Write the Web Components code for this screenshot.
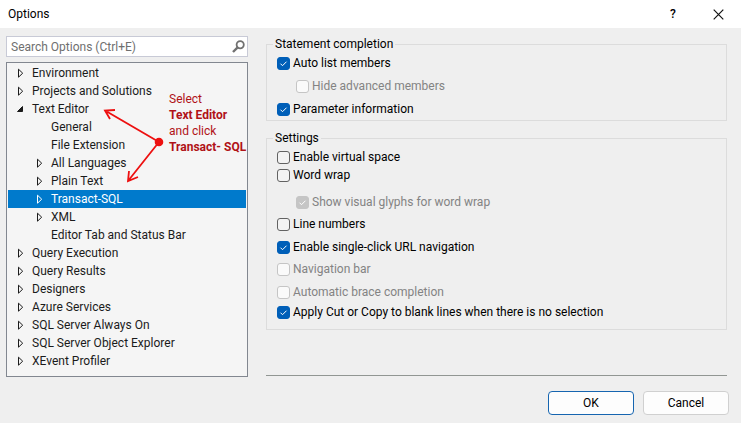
<!DOCTYPE html>
<html lang="en">
<head>
<meta charset="utf-8">
<meta name="viewport" content="width=device-width, initial-scale=1">
<title>Options</title>
<style>
  body {
    margin: 0;
    font-family: Roboto, "Open Sans", sans-serif;
    font-size: 12px;
    line-height: 18px;
    color: #1b1b1b;
    background: #efefef;
  }
</style>
</head>
<body>
<options-dialog heading="Options">
  <search-box slot="side" placeholder="Search Options (Ctrl+E)"></search-box>
  <options-tree slot="side">
    <tree-row state="closed">Environment</tree-row>
    <tree-row state="closed">Projects and Solutions</tree-row>
    <tree-row state="open">Text Editor</tree-row>
    <tree-row nested>General</tree-row>
    <tree-row nested>File Extension</tree-row>
    <tree-row nested state="closed">All Languages</tree-row>
    <tree-row nested state="closed">Plain Text</tree-row>
    <tree-row nested state="closed" selected>Transact-SQL</tree-row>
    <tree-row nested state="closed">XML</tree-row>
    <tree-row nested>Editor Tab and Status Bar</tree-row>
    <tree-row state="closed">Query Execution</tree-row>
    <tree-row state="closed">Query Results</tree-row>
    <tree-row state="closed">Designers</tree-row>
    <tree-row state="closed">Azure Services</tree-row>
    <tree-row state="closed">SQL Server Always On</tree-row>
    <tree-row state="closed">SQL Server Object Explorer</tree-row>
    <tree-row state="closed">XEvent Profiler</tree-row>
    <tree-callout slot="callout">
      Select<br><b>Text Editor</b><br>and click<br><b>Transact- SQL</b>
    </tree-callout>
  </options-tree>

  <option-group heading="Statement completion">
    <check-option checked>Auto list members</check-option>
    <check-option nested disabled space="medium">Hide advanced members</check-option>
    <check-option checked space="medium">Parameter information</check-option>
  </option-group>
  <option-group heading="Settings">
    <check-option>Enable virtual space</check-option>
    <check-option>Word wrap</check-option>
    <check-option nested disabled checked space="large">Show visual glyphs for word wrap</check-option>
    <check-option space="small">Line numbers</check-option>
    <check-option checked space="medium">Enable single-click URL navigation</check-option>
    <check-option disabled space="small">Navigation bar</check-option>
    <check-option disabled space="medium">Automatic brace completion</check-option>
    <check-option checked space="tiny">Apply Cut or Copy to blank lines when there is no selection</check-option>
  </option-group>

  <dialog-button slot="actions" primary>OK</dialog-button>
  <dialog-button slot="actions">Cancel</dialog-button>
</options-dialog>

<script>
class OptionsDialog extends HTMLElement {
  constructor() {
    super();

    this.shadowObj = this.attachShadow({ mode: "open" });
    this.render();
  }

  getStyles() {
    return `
        <style>
        :host {
          display: flex;
          flex-direction: column;
          min-height: 100vh;
        }

        header {
          display: flex;
          align-items: center;
          height: 28px;
          padding: 0 8px;
          background: #fff;
          color: #000;
        }

        h1 {
          flex: 1;
          margin: 0;
          font-size: 12px;
          font-weight: normal;
        }

        header button {
          display: flex;
          align-items: center;
          justify-content: center;
          width: 60px;
          height: 24px;
          padding: 0;
          border: 0;
          background: none;
          color: #000;
          font: inherit;
          font-weight: 500;
        }

        header button:last-child {
          width: 30px;
        }

        main {
          display: flex;
          flex: 1;
          gap: 18px;
          padding: 8px 14px 0 6px;
        }

        .side {
          display: flex;
          flex-direction: column;
          flex: 0 0 242px;
          gap: 5px;
        }

        .page {
          display: flex;
          flex: 1;
          flex-direction: column;
          gap: 9px;
          margin-bottom: 1px;
          border-bottom: 1px solid #919693;
        }

        footer {
          display: flex;
          justify-content: flex-end;
          gap: 9px;
          padding: 14px 12px 8px;
        }
        </style>
      `;
  }

  getTemplate() {
    return `
          ${this.getStyles()}
          <header>
            <h1>${this.getAttribute("heading")}</h1>
            <button type="button" aria-label="Help">?</button>
            <button type="button" aria-label="Close">
              <svg width="11" height="11" viewBox="0 0 11 11" stroke="#111" stroke-width="1.2">
                <path d="M.7 .7 10.3 10.3M10.3 .7.7 10.3"/>
              </svg>
            </button>
          </header>
          <main>
            <div class="side"><slot name="side"></slot></div>
            <div class="page"><slot></slot></div>
          </main>
          <footer><slot name="actions"></slot></footer>
        `;
  }

  render() {
    this.shadowObj.innerHTML = this.getTemplate();
  }
}

class SearchBox extends HTMLElement {
  constructor() {
    super();

    this.shadowObj = this.attachShadow({ mode: "open" });
    this.render();
  }

  getStyles() {
    return `
        <style>
        :host {
          display: flex;
          align-items: center;
          box-sizing: border-box;
          height: 21px;
          padding: 0 2px 0 4px;
          border: 1px solid #c8cad6;
          background: #fff;
        }

        input {
          flex: 1;
          min-width: 0;
          padding: 0;
          border: 0;
          outline: 0;
          background: none;
          font: inherit;
        }

        input::placeholder {
          color: #6f6f6f;
          opacity: 1;
        }
        </style>
      `;
  }

  getTemplate() {
    const text = this.getAttribute("placeholder");
    return `
          ${this.getStyles()}
          <input type="text" placeholder="${text}" aria-label="${text}">
          <svg width="13" height="13" viewBox="0 0 13 13" fill="none" stroke="#717171">
            <circle cx="8.2" cy="4.8" r="3.6" stroke-width="1.8"/>
            <path d="M5.4 7.6 1 12" stroke-width="2.4"/>
          </svg>
        `;
  }

  render() {
    this.shadowObj.innerHTML = this.getTemplate();
  }
}

class OptionsTree extends HTMLElement {
  constructor() {
    super();

    this.shadowObj = this.attachShadow({ mode: "open" });
    this.render();
  }

  getTemplate() {
    return `
          <style>
          :host {
            display: block;
            position: relative;
            flex: 1;
            box-sizing: border-box;
            padding: 1px 1px 5px;
            border: 1px solid #828790;
            background: #f5f5f5;
          }
          </style>
          <div role="tree" aria-label="Option pages"><slot></slot></div>
          <slot name="callout"></slot>
        `;
  }

  render() {
    this.shadowObj.innerHTML = this.getTemplate();
  }
}

class TreeRow extends HTMLElement {
  constructor() {
    super();

    this.shadowObj = this.attachShadow({ mode: "open" });
    this.setAttribute("role", "treeitem");
    this.render();
  }

  getStyles() {
    return `
        <style>
        :host {
          display: flex;
          align-items: center;
          height: 18px;
          padding-left: 8px;
          white-space: nowrap;
        }

        :host([nested]) {
          padding-left: 27px;
        }

        :host([selected]) {
          background: #007acc;
          color: #fff;
        }

        svg {
          width: 8px;
          height: 10px;
          margin-right: 8px;
          fill: none;
          stroke: currentColor;
        }
        </style>
      `;
  }

  getArrow() {
    switch (this.getAttribute("state")) {
      case "open":
        return `<path d="M6.5 2.500v5h-5z" fill="currentColor"/>`;
      case "closed":
        return `<path d="M2.500 1.200v8L6.700 5.200z"/>`;
      default:
        return "";
    }
  }

  getTemplate() {
    return `
          ${this.getStyles()}
          <svg viewBox="0 0 8 10" aria-hidden="true">${this.getArrow()}</svg>
          <span><slot></slot></span>
        `;
  }

  render() {
    this.shadowObj.innerHTML = this.getTemplate();
  }
}

// Red note and arrows floating over the tree
class TreeCallout extends HTMLElement {
  constructor() {
    super();

    this.shadowObj = this.attachShadow({ mode: "open" });
    this.render();
  }

  getTemplate() {
    return `
          <style>
          :host {
            display: flex;
            position: absolute;
            top: 28px;
            left: 96px;
            gap: 4px;
            color: #b01217;
            line-height: 16px;
            white-space: nowrap;
            pointer-events: none;
          }
          </style>
          <svg width="62" height="96" viewBox="0 0 62 96" fill="none" stroke="#ed1010" stroke-width="1.8">
            <path d="M56 51 2 19.500M12 19 2 19.500 7 28M56 51 25 90M26 80 25 90 35 86"/>
            <circle cx="56" cy="51" r="3.400" fill="#ed1010"/>
          </svg>
          <div><slot></slot></div>
        `;
  }

  render() {
    this.shadowObj.innerHTML = this.getTemplate();
  }
}

class OptionGroup extends HTMLElement {
  constructor() {
    super();

    this.shadowObj = this.attachShadow({ mode: "open" });
    this.render();
  }

  getTemplate() {
    return `
          <style>
          :host {
            display: block;
            color: #000;
          }

          fieldset {
            min-width: 0;
            margin: 0;
            padding: 2px 10px;
            border: 1px solid #dcdcdc;
          }

          :host(:last-of-type) fieldset {
            padding-bottom: 8px;
          }

          legend {
            height: 16px;
            margin-left: -4px;
            padding: 0 2px;
            line-height: 16px;
          }
          </style>
          <fieldset>
            <legend>${this.getAttribute("heading")}</legend>
            <slot></slot>
          </fieldset>
        `;
  }

  render() {
    this.shadowObj.innerHTML = this.getTemplate();
  }
}

class CheckOption extends HTMLElement {
  constructor() {
    super();

    this.shadowObj = this.attachShadow({ mode: "open" });
    this.render();
  }

  getStyles() {
    return `
        <style>
        :host {
          display: block;
        }

        :host([nested]) { padding-left: 19px; }
        :host([disabled]) { color: #838383; }
        :host([space="tiny"]) { margin-top: 2px; }
        :host([space="small"]) { margin-top: 4px; }
        :host([space="medium"]) { margin-top: 5px; }
        :host([space="large"]) { margin-top: 9px; }

        label {
          display: flex;
          align-items: center;
          gap: 3px;
        }

        .box {
          display: grid;
        }

        .box > * {
          grid-area: 1 / 1;
        }

        input {
          appearance: none;
          box-sizing: border-box;
          width: 13px;
          height: 13px;
          margin: 0;
          border: 1px solid #626262;
          border-radius: 3px;
          background: #f3f3f3;
        }

        input:checked {
          border-color: #005fb8;
          background: #005fb8;
        }

        input:disabled {
          border-color: #c5c5c5;
          background: #fafafa;
        }

        input:checked:disabled {
          background: #c5c5c5;
        }

        svg {
          display: none;
          pointer-events: none;
        }

        input:checked + svg {
          display: block;
        }
        </style>
      `;
  }

  getTemplate() {
    const checked = this.hasAttribute("checked") ? "checked" : "";
    const disabled = this.hasAttribute("disabled") ? "disabled" : "";
    return `
          ${this.getStyles()}
          <label>
            <span class="box">
              <input type="checkbox" ${checked} ${disabled}>
              <svg width="13" height="13" viewBox="0 0 13 13" fill="none" stroke="#fff">
                <path d="M3.500 6.700 5.500 8.700 9.500 4.700"/>
              </svg>
            </span>
            <span><slot></slot></span>
          </label>
        `;
  }

  render() {
    this.shadowObj.innerHTML = this.getTemplate();
  }
}

class DialogButton extends HTMLElement {
  constructor() {
    super();

    this.shadowObj = this.attachShadow({ mode: "open" });
    this.render();
  }

  getTemplate() {
    return `
          <style>
          :host {
            display: block;
          }

          button {
            min-width: 86px;
            height: 24px;
            padding: 0 12px;
            border: 1px solid #d0d0d0;
            border-radius: 4px;
            background: #fdfdfd;
            color: #000;
            font: inherit;
          }

          :host([primary]) button {
            border-color: #1665b0;
          }
          </style>
          <button type="button"><slot></slot></button>
        `;
  }

  render() {
    this.shadowObj.innerHTML = this.getTemplate();
  }
}

customElements.define("options-dialog", OptionsDialog);
customElements.define("search-box", SearchBox);
customElements.define("options-tree", OptionsTree);
customElements.define("tree-row", TreeRow);
customElements.define("tree-callout", TreeCallout);
customElements.define("option-group", OptionGroup);
customElements.define("check-option", CheckOption);
customElements.define("dialog-button", DialogButton);
</script>
</body>
</html>
